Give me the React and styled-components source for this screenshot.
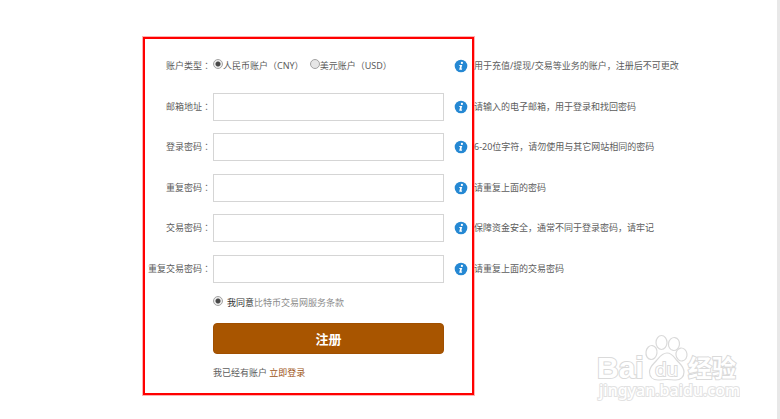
import React from "react";
import styled, { createGlobalStyle } from "styled-components";

const GlobalStyle = createGlobalStyle`
  *, *::before, *::after { box-sizing: border-box; }
  body {
    margin: 0;
    background: #fff;
    color: #5c5c5c;
    font: 9px/14px "Noto Sans", "Noto Sans CJK SC", sans-serif;
  }
`;

const Page = styled.main`
  position: relative;
  display: flex;
  align-items: flex-start;
  min-height: 100vh;
  padding: 37px 20px 24px 143px;
  border-right: 3px solid #e8e8e8;
`;

const Panel = styled.form`
  flex: 0 1 331px;
  padding: 13px 0;
  border: 2px solid #ff0000;
  box-shadow: 0 0 0 1px rgba(255, 0, 0, 0.3);
`;

const Rows = styled.div`
  display: flex;
  flex-direction: column;
  justify-content: space-between;
  min-height: 231px;
`;

const HintColumn = styled(Rows)`
  position: relative;
  flex: 1;
  margin-top: 15px;
`;

const Hint = styled.p`
  display: flex;
  align-items: center;
  height: 28px;
  margin: 0;
  white-space: nowrap;
`;

const Row = styled.div`
  display: grid;
  grid-template-columns: 68px minmax(0, 1fr) 28px;
  align-items: center;
  height: 28px;
`;

const Label = styled.label`
  padding-right: 2px;
  text-align: right;
  white-space: nowrap;
`;

const Colon = styled.span`
  font-family: "Noto Sans CJK TC", sans-serif;
  line-height: 1;
`;

const TextInput = styled.input`
  width: 100%;
  height: 28px;
  padding: 0 8px;
  border: 1px solid #d5d5d5;
  background: #fff;
  color: inherit;
  font: inherit;
`;

const RadioGroup = styled.div`
  display: flex;
  gap: 6px;
  white-space: nowrap;
`;

const RadioLabel = styled.label`
  display: flex;
  align-items: center;
`;

const Radio = styled.input`
  flex: none;
  appearance: none;
  width: 10px;
  height: 10px;
  margin: 0 0 4px 0;
  border: 1px solid #a3a3a3;
  border-radius: 50%;
  background: #e6e6e6;
  &:checked {
    background: radial-gradient(circle, #484848 0 2px, #ececec 3px);
  }
`;

const Icon = styled.svg`
  display: block;
  width: 14px;
  height: 14px;
  margin-left: 10px;
`;

const Footer = styled.div`
  display: flex;
  flex-direction: column;
  margin: 12px 28px 0 68px;
`;

const Terms = styled.div`
  display: flex;
  align-items: center;
  height: 16px;
  white-space: nowrap;
`;

const TermsLabel = styled.label`
  margin-left: 4px;
  color: #333;
`;

const TextLink = styled.a`
  color: ${(p) => (p.$accent ? "#9c5314" : "#8c8c8c")};
  text-decoration: none;
`;

const SubmitButton = styled.button`
  height: 31px;
  margin-top: 12px;
  padding: 0;
  border: 1px solid #a04f00;
  border-radius: 4px;
  background: #a85500;
  color: #fff;
  font: bold 13px/20px "Noto Sans CJK SC", sans-serif;
`;

const Login = styled.p`
  margin: 12px 0 0;
  white-space: nowrap;
`;

const Watermark = styled.svg`
  position: absolute;
  right: 37px;
  bottom: 14px;
  width: 144px;
  height: 74px;
  pointer-events: none;
`;

const FIELDS = [
  { id: "email", label: "邮箱地址", type: "email", hint: "请输入的电子邮箱，用于登录和找回密码" },
  { id: "password", label: "登录密码", type: "password", hint: "6-20位字符，请勿使用与其它网站相同的密码" },
  { id: "password2", label: "重复密码", type: "password", hint: "请重复上面的密码" },
  { id: "trade", label: "交易密码", type: "password", hint: "保障资金安全，通常不同于登录密码，请牢记" },
  { id: "trade2", label: "重复交易密码", type: "password", hint: "请重复上面的交易密码" },
];

function InfoIcon() {
  return (
    <Icon viewBox="0 0 14 14" aria-hidden="true">
      <circle cx="7" cy="7" r="6.3" fill="#2588d3" />
      <circle cx="7.9" cy="3.9" r="1.1" fill="#fff" />
      <path d="M5.4 5.9h2.8L7.3 9.6h.9l-.3 1.1H5.2l.9-3.7h-.9z" fill="#fff" />
    </Icon>
  );
}

function BaiduWatermark() {
  return (
    <Watermark viewBox="0 0 144 74" role="img" aria-label="Baidu 经验">
      <g fill="#fff" stroke="#dadada" strokeWidth="1.2">
        <ellipse cx="65.5" cy="11.500" rx="5.5" ry="7" />
        <ellipse cx="78" cy="13" rx="5.5" ry="6.5" transform="rotate(8 78 13)" />
        <ellipse cx="55.5" cy="21.500" rx="5.5" ry="7" transform="rotate(8 55.500 21.500)" />
        <ellipse cx="85.5" cy="23.500" rx="5.5" ry="6.5" transform="rotate(-8 85.500 23.500)" />
        <g strokeWidth="2" paintOrder="stroke" fontFamily="Liberation Sans" fontWeight="700">
          <text x="1" y="47" fontSize="30">Bai</text>
          <text x="92" y="46" fontFamily="Noto Sans CJK SC" fontSize="24">经验</text>
        </g>
        <path d="M71 22c5 0 7 4 10 7.500 3 3.500 7 6 7 11.500 0 5-3.500 8-8 8-3.500 0-6-.500-9-.500s-5.500.500-9 .500c-5 0-8.500-3-8.500-8 0-5.500 4-8 7-11.500 3-3.500 5.500-7.500 10.500-7.500z" />
        <text x="59" y="45" fontFamily="Open Sans" fontSize="19" strokeWidth="2" paintOrder="stroke">du</text>
      </g>
      <text x="3" y="65" fill="#fff" stroke="#e2e2e2" strokeWidth="2" paintOrder="stroke" fontFamily="Noto Sans" fontSize="16" fontWeight="500">
        jingyan.baidu.com
      </text>
    </Watermark>
  );
}

export default function App() {
  return (
    <>
      <GlobalStyle />
      <Page>
        <Panel onSubmit={(e) => e.preventDefault()}>
          <Rows>
            <Row role="radiogroup" aria-labelledby="account-type" aria-describedby="account-hint">
              <Label as="span" id="account-type">账户类型<Colon>：</Colon></Label>
              <RadioGroup>
                <RadioLabel><Radio type="radio" name="account" value="CNY" defaultChecked />人民币账户（CNY）</RadioLabel>
                <RadioLabel><Radio type="radio" name="account" value="USD" />美元账户（USD）</RadioLabel>
              </RadioGroup>
              <InfoIcon />
            </Row>
            {FIELDS.map((f) => (
              <Row key={f.id}>
                <Label htmlFor={f.id}>{f.label}<Colon>：</Colon></Label>
                <TextInput id={f.id} type={f.type} aria-describedby={`${f.id}-hint`} />
                <InfoIcon />
              </Row>
            ))}
          </Rows>
          <Footer>
            <Terms>
              <Radio type="radio" id="agree" name="agree" defaultChecked />
              <TermsLabel htmlFor="agree">我同意</TermsLabel>
              <TextLink href="#terms">比特币交易网服务条款</TextLink>
            </Terms>
            <SubmitButton type="submit">注册</SubmitButton>
            <Login>我已经有账户 <TextLink $accent href="#login">立即登录</TextLink></Login>
          </Footer>
        </Panel>
        <HintColumn>
          <Hint id="account-hint">用于充值/提现/交易等业务的账户，注册后不可更改</Hint>
          {FIELDS.map((f) => (
            <Hint key={f.id} id={`${f.id}-hint`}>{f.hint}</Hint>
          ))}
        </HintColumn>
        <BaiduWatermark />
      </Page>
    </>
  );
}
